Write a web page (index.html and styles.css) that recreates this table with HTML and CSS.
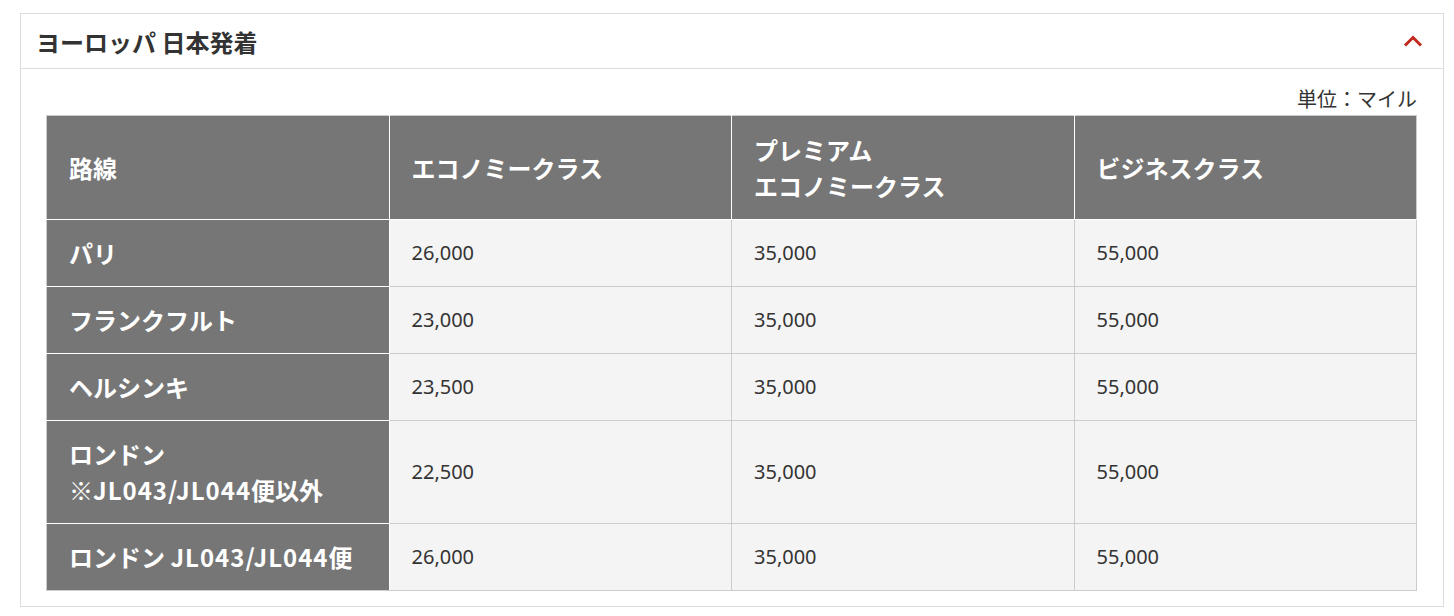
FILE: index.html
```html
<!DOCTYPE html>
<html lang="ja">
<head>
<meta charset="utf-8">
<link rel="stylesheet" href="styles.css">
</head>
<body>
<div class="page">
  <section class="panel">
    <header class="panel-head">
      <h2 class="panel-title">ヨーロッパ 日本発着</h2>
      <svg class="chevron" width="20" height="14" viewBox="0 0 20 14"><path d="M2 11.5 L10 3.5 L18 11.5" fill="none" stroke="#c2281c" stroke-width="3"/></svg>
    </header>
    <div class="panel-body">
      <p class="unit">単位：マイル</p>
      <table class="miles">
        <thead>
          <tr><th>路線</th><th>エコノミークラス</th><th>プレミアム<br>エコノミークラス</th><th>ビジネスクラス</th></tr>
        </thead>
        <tbody>
          <tr><th>パリ</th><td>26,000</td><td>35,000</td><td>55,000</td></tr>
          <tr><th>フランクフルト</th><td>23,000</td><td>35,000</td><td>55,000</td></tr>
          <tr><th>ヘルシンキ</th><td>23,500</td><td>35,000</td><td>55,000</td></tr>
          <tr><th>ロンドン<br>※<span class="code">JL043/JL044</span>便以外</th><td>22,500</td><td>35,000</td><td>55,000</td></tr>
          <tr><th>ロンドン <span class="code">JL043/JL044</span>便</th><td>26,000</td><td>35,000</td><td>55,000</td></tr>
        </tbody>
      </table>
    </div>
  </section>
</div>
</body>
</html>
```

FILE: styles.css
```css
html, body {
  margin: 0;
  padding: 0;
  background: #fff;
}
body {
  font-family: "Noto Sans", "Noto Sans CJK JP", sans-serif;
  color: #333;
}
.page {
  padding: 13px 10px 10px 20px;
}
.panel {
  border: 1px solid #dcdcdc;
  background: #fff;
}
.panel-head {
  height: 54px;
  border-bottom: 1px solid #dcdcdc;
  display: flex;
  align-items: center;
  justify-content: space-between;
  padding: 0 20px 0 15px;
}
.panel-title {
  margin: 0;
  padding-top: 2px;
  font-family: "Noto Sans CJK JP", sans-serif;
  font-size: 24px;
  font-weight: 700;
  line-height: 30px;
  color: #333;
}
.chevron {
  display: block;
}
.panel-body {
  padding: 16px 26px 15px 25px;
}
.unit {
  margin: 0;
  text-align: right;
  font-size: 20px;
  line-height: 30px;
  color: #333;
}
.miles {
  width: 100%;
  table-layout: fixed;
  border-collapse: collapse;
  border: 1px solid #cccccc;
}
.miles th, .miles td {
  padding: 15px 22px;
  line-height: 36px;
  text-align: left;
  vertical-align: middle;
}
.miles th {
  background: #767676;
  color: #fff;
  font-family: "Noto Sans CJK JP", sans-serif;
  font-size: 24px;
  font-weight: 700;
  border: 1px solid #fff;
}
.miles .code {
  letter-spacing: 1px;
}
.miles thead th {
  padding-top: 16px;
  padding-bottom: 15px;
  border-top-color: #cccccc;
}
.miles thead th:first-child,
.miles tbody th {
  border-left-color: #cccccc;
}
.miles thead th:last-child {
  border-right-color: #cccccc;
}
.miles tbody tr:last-child th {
  border-bottom-color: #cccccc;
}
.miles td {
  background: #f4f4f4;
  color: #333;
  font-size: 20px;
  border: 1px solid #cccccc;
}
```
